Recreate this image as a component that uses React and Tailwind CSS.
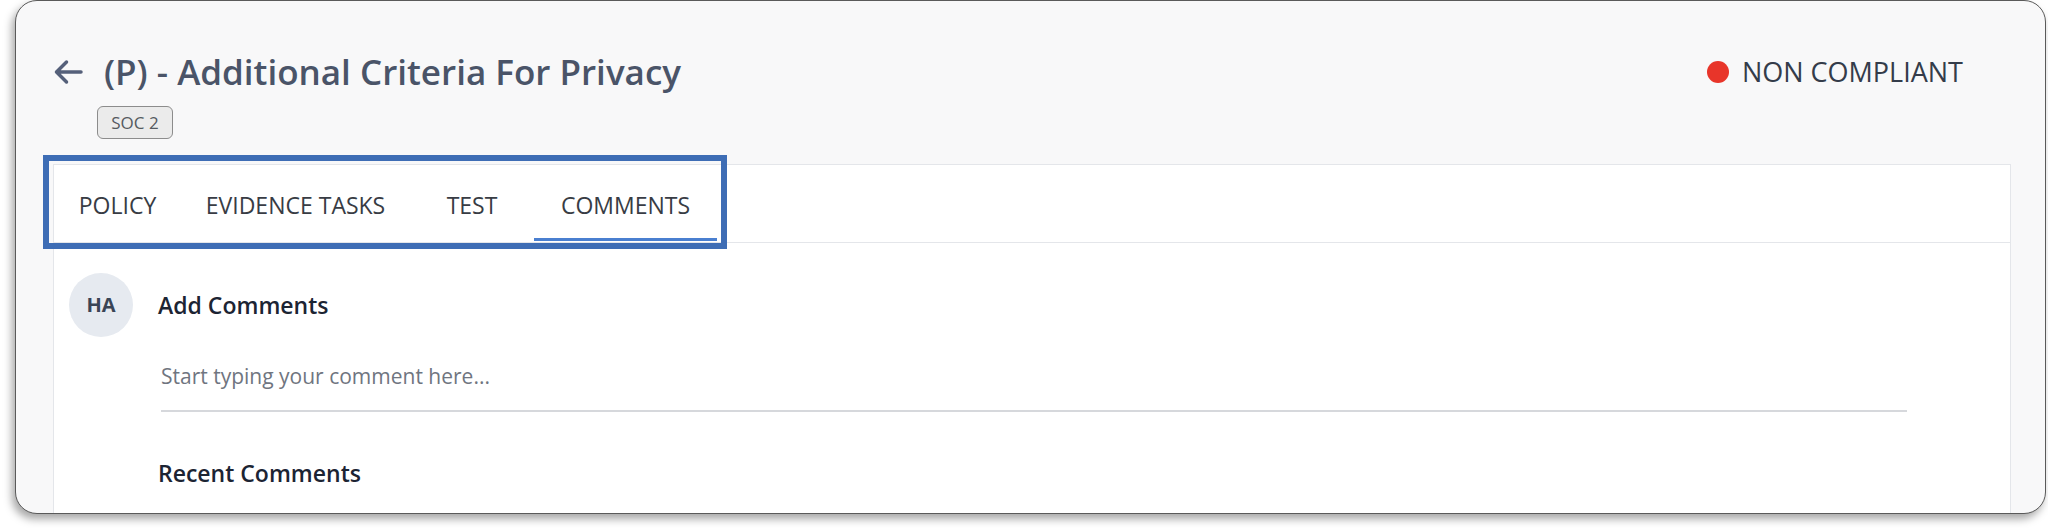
import React from "react";

const tabs = [
  { label: "POLICY", width: "w-[127px]" },
  { label: "EVIDENCE TASKS", width: "w-[229px]" },
  { label: "TEST", width: "w-[124px]" },
  { label: "COMMENTS", width: "w-[183px]", active: true },
];

const BackArrow = () => (
  <svg width="30" height="26" viewBox="0 0 30 26" fill="none" className="text-[#55607a]">
    <path
      d="M28 13H3.5M13.5 3L3.5 13l10 10"
      stroke="currentColor"
      strokeWidth="3.5"
      strokeLinecap="round"
      strokeLinejoin="round"
    />
  </svg>
);

export default function App() {
  return (
    <div className="w-[2048px] h-[528px] bg-white font-['Open_Sans',sans-serif]">
      <div className="relative ml-[15px] w-[2031px] h-[514px] rounded-[22px] border border-[#5a5a5a] bg-[#f8f8f9] overflow-hidden shadow-[-3px_5px_8px_rgba(0,0,0,0.35)] flex flex-col">
        {/* header */}
        <div className="flex items-start justify-between pt-[51px] pl-[37px] pr-[82px]">
          <div className="flex flex-col">
            <div className="flex items-center h-[40px] gap-[21px]">
              <BackArrow />
              <h1 className="text-[35px] leading-[40px] font-semibold text-[#4a5468]">
                (P) - Additional Criteria For Privacy
              </h1>
            </div>
            <span className="mt-[14px] ml-[44px] w-[76px] h-[33px] flex items-center justify-center rounded-[6px] border border-[#8c8c8c] bg-[#ebebeb] text-[17px] text-[#555a60]">
              SOC 2
            </span>
          </div>
          <div className="flex items-center h-[40px] gap-[13px]">
            <span className="w-[22px] h-[22px] rounded-full bg-[#e8352a]" />
            <span className="text-[27px] leading-[40px] text-[#343c4a]">NON COMPLIANT</span>
          </div>
        </div>

        {/* card */}
        <div className="mt-[25px] ml-[37px] mr-[34px] flex-1 bg-white border-l border-t border-r border-[#e4e6ea]">
          <div className="flex h-[78px] border-b border-[#e4e6ea]">
            {tabs.map((t) => (
              <div
                key={t.label}
                className={`relative flex items-center justify-center pt-[3px] ${t.width} text-[23px] text-[#383c44]`}
              >
                {t.label}
                {t.active && (
                  <span className="absolute left-0 right-0 bottom-[1px] h-[3px] bg-[#4a7fd0]" />
                )}
              </div>
            ))}
          </div>

          <div className="pl-[15px] pt-[30px]">
            <div className="flex items-center gap-[25px]">
              <div className="w-[64px] h-[64px] rounded-full bg-[#e6eaf0] flex items-center justify-center text-[20px] font-bold text-[#3a4556]">
                HA
              </div>
              <span className="text-[23px] font-semibold text-[#1c2433]">Add Comments</span>
            </div>
            <div className="ml-[92px]">
              <input
                className="mt-[24px] w-[1746px] border-b-2 border-[#d6d8dc] pb-[19px] text-[21px] leading-[30px] text-[#333] placeholder:text-[#6f7580] outline-none bg-transparent"
                placeholder="Start typing your comment here..."
              />
              <h2 className="mt-[45px] -ml-[3px] text-[23px] leading-[32px] font-semibold text-[#1c2433]">
                Recent Comments
              </h2>
            </div>
          </div>
        </div>

        {/* annotation highlight */}
        <div className="absolute left-[27px] top-[154px] w-[684px] h-[94px] border-[6px] border-[#3e6db5] pointer-events-none" />
      </div>
    </div>
  );
}
